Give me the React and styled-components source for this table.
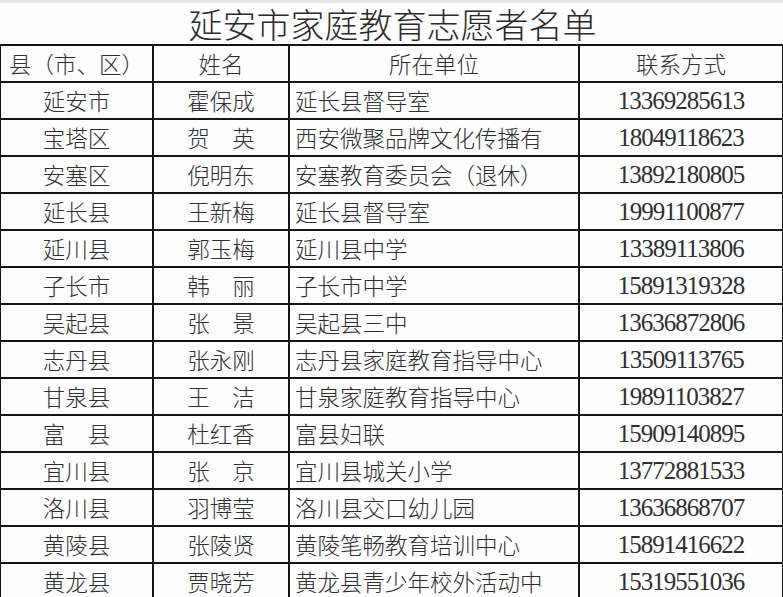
import React from "react";
import styled, { createGlobalStyle } from "styled-components";

const Global = createGlobalStyle`
  html, body {
    margin: 0;
    padding: 0;
    background: #fff;
  }
  body {
    width: 783px;
    height: 597px;
    overflow: hidden;
  }
`;

const Page = styled.div`
  width: 783px;
  height: 597px;
  overflow: hidden;
  background: #fdfdfd;
  border-top: 3px solid #e6e6e6;
  box-sizing: border-box;
`;

const Title = styled.h1`
  margin: 0;
  height: 41px;
  line-height: 41px;
  text-align: center;
  font-family: "Noto Sans CJK SC", sans-serif;
  font-weight: 300;
  font-size: 34px;
  color: #2a2a2a;
  padding-left: 2px;
`;

const Table = styled.table`
  margin-left: -1px;
  width: 783px;
  border-collapse: collapse;
  table-layout: fixed;
`;

const Cell = styled.td`
  border: 2px solid #161616;
  height: 35px;
  padding: 0 ${(p) => (p.$left ? "5px" : "0")};
  text-align: ${(p) => (p.$left ? "left" : "center")};
  white-space: nowrap;
  overflow: hidden;
  color: #2f2f2f;
  font-family: ${(p) =>
    p.$num
      ? '"Liberation Serif", "Noto Sans CJK SC", serif'
      : '"Noto Sans CJK SC", sans-serif'};
  font-weight: ${(p) => (p.$num ? 400 : 300)};
  font-size: ${(p) => (p.$num ? "25px" : "22.5px")};
  line-height: 1;
  letter-spacing: ${(p) => (p.$num ? "-1px" : "0")};
`;

const rows = [
  ["延安市", "霍保成", "延长县督导室", "13369285613"],
  ["宝塔区", "贺　英", "西安微聚品牌文化传播有", "18049118623"],
  ["安塞区", "倪明东", "安塞教育委员会（退休）", "13892180805"],
  ["延长县", "王新梅", "延长县督导室", "19991100877"],
  ["延川县", "郭玉梅", "延川县中学", "13389113806"],
  ["子长市", "韩　丽", "子长市中学", "15891319328"],
  ["吴起县", "张　景", "吴起县三中", "13636872806"],
  ["志丹县", "张永刚", "志丹县家庭教育指导中心", "13509113765"],
  ["甘泉县", "王　洁", "甘泉家庭教育指导中心", "19891103827"],
  ["富　县", "杜红香", "富县妇联", "15909140895"],
  ["宜川县", "张　京", "宜川县城关小学", "13772881533"],
  ["洛川县", "羽博莹", "洛川县交口幼儿园", "13636868707"],
  ["黄陵县", "张陵贤", "黄陵笔畅教育培训中心", "15891416622"],
  ["黄龙县", "贾晓芳", "黄龙县青少年校外活动中", "15319551036"],
];

export default function App() {
  return (
    <Page>
      <Global />
      <Title>延安市家庭教育志愿者名单</Title>
      <Table>
        <colgroup>
          <col style={{ width: 153 }} />
          <col style={{ width: 136 }} />
          <col style={{ width: 290 }} />
          <col style={{ width: 204 }} />
        </colgroup>
        <tbody>
          <tr>
            <Cell>县（市、区）</Cell>
            <Cell>姓名</Cell>
            <Cell>所在单位</Cell>
            <Cell>联系方式</Cell>
          </tr>
          {rows.map((r) => (
            <tr key={r[0]}>
              <Cell>{r[0]}</Cell>
              <Cell>{r[1]}</Cell>
              <Cell $left>{r[2]}</Cell>
              <Cell $num>{r[3]}</Cell>
            </tr>
          ))}
        </tbody>
      </Table>
    </Page>
  );
}
